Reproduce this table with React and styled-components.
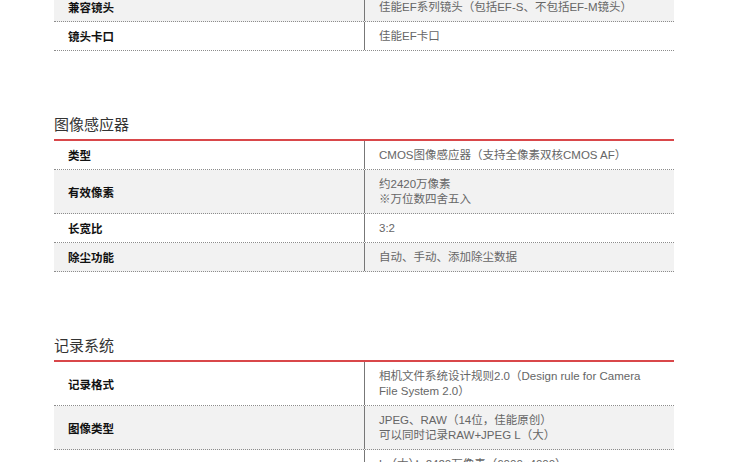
import React from 'react';
import styled, { createGlobalStyle } from 'styled-components';

const GlobalStyle = createGlobalStyle`
  body {
    margin: 0;
    background: #fff;
    font-family: "Noto Sans CJK SC", sans-serif;
  }
`;

const Page = styled.div`
  width: 620px;
  margin: -7px 0 0 54px;
`;

const Section = styled.section`
  padding-top: ${props => (props.$first ? 0 : 62)}px;
`;

const Heading = styled.h2`
  margin: 0 0 4px;
  font-size: 15px;
  line-height: 22px;
  font-weight: 400;
  color: #333;
`;

const Table = styled.div`
  border-top: ${props => (props.$ruled ? '2px solid #d9474a' : 'none')};
`;

const Row = styled.div`
  display: grid;
  grid-template-columns: 311px 1fr;
  background: ${props => (props.$shaded ? '#f2f2f2' : '#fff')};
  border-bottom: 1px dotted #8c8c8c;
`;

const Label = styled.div`
  display: flex;
  align-items: center;
  padding: 0 14px;
  border-right: 1px solid #777;
  font-size: 11.5px;
  font-weight: 700;
  color: #111;
`;

const Value = styled.div`
  padding: 7px 15px 6px 14px;
  font-family: "Liberation Sans", "Noto Sans CJK SC", sans-serif;
  font-size: 11.5px;
  line-height: 15px;
  color: #666;
  white-space: nowrap;
`;

const sections = [
  {
    title: null,
    offset: 1,
    rows: [
      ['兼容镜头', ['佳能EF系列镜头（包括EF-S、不包括EF-M镜头）']],
      ['镜头卡口', ['佳能EF卡口']],
    ],
  },
  {
    title: '图像感应器',
    offset: 0,
    rows: [
      ['类型', ['CMOS图像感应器（支持全像素双核CMOS AF）']],
      ['有效像素', ['约2420万像素', '※万位数四舍五入']],
      ['长宽比', ['3:2']],
      ['除尘功能', ['自动、手动、添加除尘数据']],
    ],
  },
  {
    title: '记录系统',
    offset: 0,
    rows: [
      ['记录格式', ['相机文件系统设计规则2.0（Design rule for Camera', 'File System 2.0）']],
      ['图像类型', ['JPEG、RAW（14位，佳能原创）', '可以同时记录RAW+JPEG L（大）']],
      ['记录像素', [
        'L（大）：2420万像素（6000×4000）',
        'M（中）：约1060万像素（3984×2656）',
        'S1（小1）：约590万像素（2976×1984）',
      ]],
    ],
  },
];

export default function App() {
  return (
    <>
      <GlobalStyle />
      <Page>
        {sections.map((section, si) => (
          <Section key={si} $first={si === 0}>
            {section.title && <Heading>{section.title}</Heading>}
            <Table $ruled={!!section.title}>
              {section.rows.map(([label, lines], ri) => (
                <Row key={ri} $shaded={(ri + section.offset) % 2 === 1}>
                  <Label>{label}</Label>
                  <Value>
                    {lines.map((line, li) => (
                      <div key={li}>{line}</div>
                    ))}
                  </Value>
                </Row>
              ))}
            </Table>
          </Section>
        ))}
      </Page>
    </>
  );
}
